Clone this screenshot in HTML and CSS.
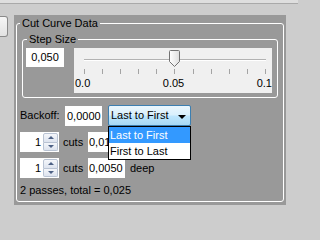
FILE: index.html
```html
<!DOCTYPE html>
<html>
<head>
<meta charset="utf-8">
<link rel="stylesheet" href="styles.css">
</head>
<body>
<div class="topstrip"></div>
<div class="workspace">
  <div class="tab-stub"></div>
  <div class="panel">
    <div class="group outer">
      <span class="legend">Cut Curve Data</span>
      <div class="group step">
        <span class="legend">Step Size</span>
        <div class="field step-value">0,050</div>
        <div class="slider">
          <div class="track"></div>
          <div class="ticks">
            <i></i><i></i><i></i><i></i><i></i><i></i><i></i><i></i><i></i><i></i><i></i>
          </div>
          <div class="labels"><span>0.0</span><span>0.05</span><span>0.1</span></div>
          <svg class="thumb" width="11" height="17" viewBox="0 0 11 17">
            <defs>
              <linearGradient id="tg" x1="0" y1="0" x2="1" y2="0">
                <stop offset="0" stop-color="#ffffff"/>
                <stop offset="1" stop-color="#dedede"/>
              </linearGradient>
            </defs>
            <path d="M1.5 0.5 H9.5 A1 1 0 0 1 10.5 1.5 V11.5 L5.5 16.5 L0.5 11.5 V1.5 A1 1 0 0 1 1.5 0.5 Z" fill="url(#tg)" stroke="#727272" stroke-width="1"/>
          </svg>
        </div>
      </div>

      <div class="row backoff-row">
        <span class="lbl">Backoff:</span>
        <div class="field backoff">0,0000</div>
        <div class="combo">
          <span class="combo-text">Last to First</span>
          <span class="combo-arrow"></span>
          <ul class="combo-list">
            <li class="selected">Last to First</li>
            <li>First to Last</li>
          </ul>
        </div>
      </div>

      <div class="row cut-row">
        <div class="spinner">
          <span class="spin-val">1</span>
          <span class="spin-btns">
            <span class="spin-btn up"><i></i></span>
            <span class="spin-btn down"><i></i></span>
          </span>
        </div>
        <span class="lbl cuts">cuts</span>
        <div class="field amount">0,0125</div>
      </div>

      <div class="row cut-row">
        <div class="spinner">
          <span class="spin-val">1</span>
          <span class="spin-btns">
            <span class="spin-btn up"><i></i></span>
            <span class="spin-btn down"><i></i></span>
          </span>
        </div>
        <span class="lbl cuts">cuts</span>
        <div class="field amount">0,0050</div>
        <span class="lbl deep">deep</span>
      </div>

      <div class="summary">2 passes, total = 0,025</div>
    </div>
  </div>
</div>
</body>
</html>
```

FILE: styles.css
```css
html {
  background: #cdcdcd;
}
html, body {
  margin: 0;
  padding: 0;
}
body {
  width: 298px;
  height: 211px;
  overflow: hidden;
  background: #cdcdcd;
  font-family: "Liberation Sans", Arial, sans-serif;
  font-size: 11px;
  line-height: 13px;
  color: #000;
}
.topstrip {
  height: 3px;
  background: #dedede;
  border-bottom: 1px solid #a9a9a9;
}
.workspace {
  display: flex;
  align-items: flex-start;
  margin-top: 11px;
}
.tab-stub {
  width: 7px;
  height: 19px;
  margin-top: 1px;
  margin-right: 6px;
  border: 1px solid #8a8a8a;
  border-left: 0;
  border-radius: 0 3px 3px 0;
  background: linear-gradient(#f6f6f6, #e2e2e2);
}
.panel {
  width: 272px;
  height: 190px;
  box-sizing: border-box;
  padding: 8px 2px 3px 2px;
  background: #999999;
}
.group {
  position: relative;
  border: 1px solid #ffffff;
  border-radius: 3px;
  box-sizing: border-box;
}
.group.outer {
  height: 179px;
}
.legend {
  position: absolute;
  top: -7px;
  left: 3px;
  padding: 0 2px;
  background: #999999;
  line-height: 13px;
  white-space: nowrap;
}
.group.step {
  margin: 15px 5px 0 5px;
  height: 59px;
  display: flex;
  align-items: flex-start;
  padding: 8px 5px 4px 3px;
}
.group.step .legend {
  left: 4px;
}
.field {
  background: #ffffff;
  box-sizing: border-box;
  height: 20px;
  line-height: 20px;
  white-space: nowrap;
  overflow: hidden;
}
.step-value {
  width: 38px;
  height: 19px;
  line-height: 19px;
  text-align: center;
  margin-right: 10px;
  flex: none;
}
.slider {
  flex: 1;
  height: 45px;
  background: #f0f0f0;
  position: relative;
}
.track {
  margin: 11px 6px 0 10px;
  height: 1px;
  background: #b2b2b2;
  border-bottom: 1px solid #ffffff;
}
.ticks {
  display: flex;
  justify-content: space-between;
  margin: 8px 6px 0 10px;
  height: 5px;
}
.ticks i {
  display: block;
  width: 1px;
  height: 5px;
  background: #a4a4a4;
}
.labels {
  display: flex;
  justify-content: space-between;
  margin: 3px 0 0 1px;
  line-height: 13px;
}
.thumb {
  position: absolute;
  left: 95px;
  top: 2px;
  display: block;
}
.row {
  display: flex;
  align-items: center;
  margin-left: 3px;
}
.backoff-row {
  margin-top: 7px;
  height: 21px;
}
.backoff-row .lbl {
  width: 40px;
  margin-right: 5px;
}
.backoff {
  width: 37px;
  padding-left: 2px;
  margin-right: 6px;
}
.combo {
  position: relative;
  width: 83px;
  height: 21px;
  box-sizing: border-box;
  border: 1px solid #3c7fb1;
  border-radius: 2px;
  background: linear-gradient(to bottom, #eaf6fd 0%, #d9f0fc 48%, #bee6fd 52%, #a7d9f5 100%);
  display: flex;
  align-items: center;
  justify-content: space-between;
  padding: 0 4px 0 2px;
}
.combo-arrow {
  width: 0;
  height: 0;
  border-left: 4px solid transparent;
  border-right: 4px solid transparent;
  border-top: 4px solid #000;
  margin-top: 2px;
}
.combo-list {
  position: absolute;
  top: 20px;
  left: -1px;
  width: 83px;
  box-sizing: border-box;
  margin: 0;
  padding: 0;
  list-style: none;
  background: #ffffff;
  border: 1px solid #000000;
  z-index: 5;
}
.combo-list li {
  height: 16px;
  line-height: 16px;
  padding-left: 1px;
  white-space: nowrap;
}
.combo-list li.selected {
  background: #3399ff;
  color: #ffffff;
}
.cut-row {
  margin-top: 6px;
  height: 20px;
}
.spinner {
  width: 39px;
  height: 20px;
  background: #ffffff;
  display: flex;
  box-sizing: border-box;
  padding: 1px 1px 1px 0;
}
.spin-val {
  flex: 1;
  text-align: right;
  padding-right: 2px;
  line-height: 18px;
}
.spin-btns {
  width: 15px;
  display: flex;
  flex-direction: column;
}
.spin-btn {
  flex: 1;
  box-sizing: border-box;
  border: 1px solid #b9c3d3;
  background: linear-gradient(#f4f6fa, #dde3ee);
  display: flex;
  align-items: center;
  justify-content: center;
}
.spin-btn.up {
  border-radius: 2px 2px 0 0;
}
.spin-btn.down {
  border-top: 0;
  border-radius: 0 0 2px 2px;
}
.spin-btn i {
  width: 0;
  height: 0;
  border-left: 3px solid transparent;
  border-right: 3px solid transparent;
}
.spin-btn.up i {
  border-bottom: 3px solid #4d6185;
}
.spin-btn.down i {
  border-top: 3px solid #4d6185;
}
.cuts {
  margin-left: 4px;
  width: 21px;
}
.amount {
  width: 37px;
  margin-left: 4px;
  padding-left: 1px;
}
.deep {
  margin-left: 5px;
}
.summary {
  margin: 6px 0 0 3px;
  line-height: 13px;
}
```
